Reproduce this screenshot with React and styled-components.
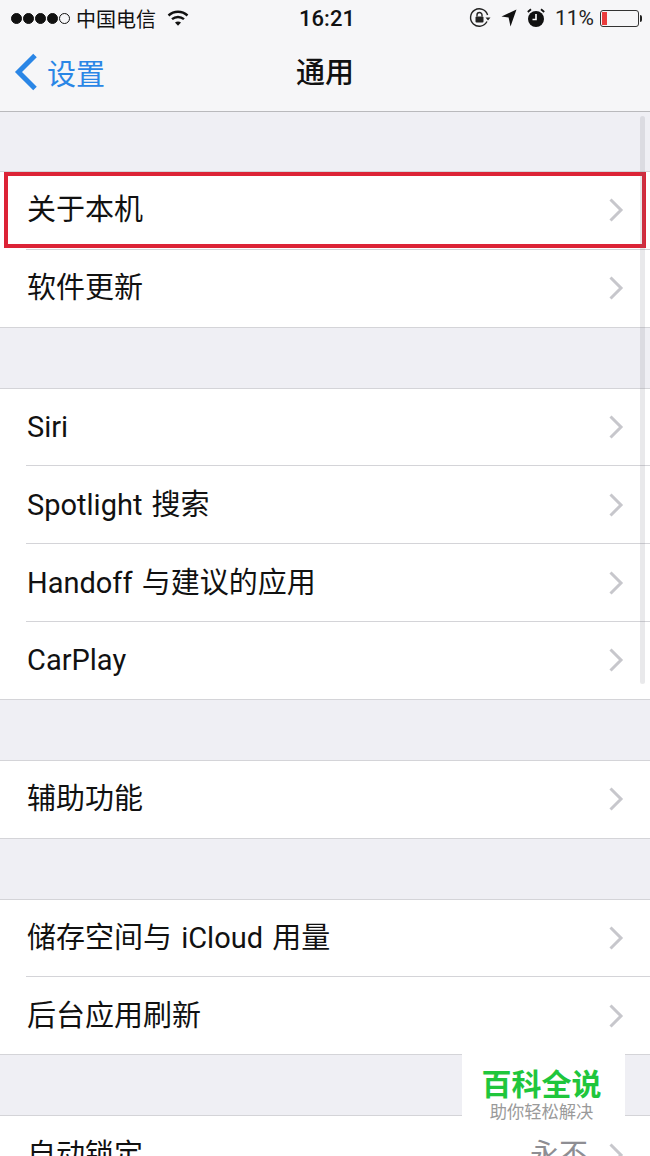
import styled, { createGlobalStyle } from "styled-components";

const CJK = `"Noto Sans CJK SC", sans-serif`;
const LATIN = `Roboto, "Noto Sans CJK SC", sans-serif`;

const GlobalStyle = createGlobalStyle`
  html, body {
    margin: 0;
    padding: 0;
    background: #efeff4;
  }
  * { box-sizing: border-box; }
`;

const Screen = styled.div`
  position: relative;
  width: 650px;
  height: 1156px;
  overflow: hidden;
  background: #efeff4;
  font-family: ${LATIN};
  color: #111;
`;

const Header = styled.header`
  height: 112px;
  background: #f6f6f8;
  border-bottom: 1px solid #b9b9bc;
`;

const StatusBar = styled.div`
  height: 36px;
  padding: 0 11px;
  display: grid;
  grid-template-columns: 1fr auto 1fr;
  align-items: center;
`;

const StatusLeft = styled.div`
  display: flex;
  align-items: center;
  font-size: 20px;
  font-family: ${CJK};
`;

const Signal = styled.div`
  display: flex;
  gap: 1px;
  margin-right: 6px;
`;

const Dot = styled.span`
  width: 11px;
  height: 11px;
  border-radius: 50%;
  background: ${({ $off }) => ($off ? "transparent" : "#111")};
  border: 1px solid #111;
`;

const Clock = styled.div`
  font-size: 22px;
  font-weight: 500;
  margin-left: 4px;
`;

const StatusRight = styled.div`
  display: flex;
  align-items: center;
  justify-content: flex-end;
  gap: 10px;
`;

const Percent = styled.span`
  font-size: 21px;
  margin-right: -4px;
  color: #222;
`;

const Battery = styled.div`
  width: 39px;
  height: 17px;
  border: 1px solid #333;
  border-radius: 3px;
  padding: 1px;
  position: relative;
  &::after {
    content: "";
    position: absolute;
    right: -4px;
    top: 4px;
    width: 2px;
    height: 7px;
    background: #222;
    border-radius: 0 2px 2px 0;
  }
`;

const BatteryFill = styled.div`
  width: 5px;
  height: 100%;
  background: #ea3c3c;
`;

const NavBar = styled.div`
  height: 75px;
  padding: 0 0 4px 14px;
  position: relative;
  display: flex;
  align-items: center;
`;

const BackLink = styled.div`
  display: flex;
  align-items: center;
  gap: 9px;
  color: #2a86e6;
  font-size: 29px;
  font-family: ${CJK};
`;

const NavTitle = styled.div`
  position: absolute;
  left: 0;
  right: 0;
  top: 13px;
  text-align: center;
  font-size: 29px;
  line-height: 42px;
  font-weight: 500;
  font-family: ${CJK};
`;

const Content = styled.main`
  padding-top: 59px;
  display: flex;
  flex-direction: column;
  gap: 60px;
`;

const Group = styled.section`
  background: #fff;
  border-top: 1px solid #d4d4d8;
  border-bottom: 1px solid #d4d4d8;
`;

const Row = styled.div`
  height: 77.8px;
  margin-left: 26px;
  padding-right: 26px;
  display: flex;
  align-items: center;
  justify-content: space-between;
  font-size: 29px;
  line-height: 40px;
  word-spacing: 2px;
  &:first-child {
    height: 76.8px;
  }
  & + & {
    border-top: 1px solid #d4d4d8;
  }
`;

const RowLabel = styled.span`
  margin-left: 1px;
`;

const RowRight = styled.div`
  display: flex;
  align-items: center;
  gap: 20px;
`;

const RowValue = styled.span`
  color: #8e8e93;
`;

const Highlight = styled.div`
  position: absolute;
  left: 4px;
  top: 172px;
  width: 642px;
  height: 76px;
  border: 4px solid #dc2336;
`;

const ScrollIndicator = styled.div`
  position: absolute;
  left: 640px;
  top: 116px;
  width: 5px;
  height: 568px;
  border-radius: 3px;
  background: rgba(120, 120, 130, 0.16);
`;

const Watermark = styled.div`
  position: absolute;
  left: 462px;
  top: 1053px;
  width: 163px;
  height: 80px;
  padding: 10px 4px 0 0;
  background: #fff;
  display: flex;
  flex-direction: column;
  align-items: center;
  font-family: ${CJK};
`;

const WatermarkTitle = styled.div`
  font-size: 30px;
  line-height: 38px;
  font-weight: 700;
  color: #1fc63c;
`;

const WatermarkSub = styled.div`
  font-size: 17.3px;
  line-height: 20px;
  color: #9a9a9a;
`;

function Chevron() {
  return (
    <svg width="16" height="26" viewBox="0 0 16 26" fill="none">
      <path d="M2.5 2.5L13 13L2.5 23.5" stroke="#c7c7cc" strokeWidth="3" />
    </svg>
  );
}

function BackChevron() {
  return (
    <svg width="24" height="38" viewBox="0 0 24 38" fill="none">
      <path d="M21 2.5L4.5 19L21 35.5" stroke="#2a86e6" strokeWidth="5" />
    </svg>
  );
}

function WifiIcon() {
  return (
    <svg width="22" height="18" viewBox="0 0 22 18" fill="none" style={{ marginLeft: 11 }}>
      <path d="M1.5 6.5C7 1.5 15 1.5 20.5 6.5" stroke="#111" strokeWidth="2.4" />
      <path d="M5 10.2C8.5 7.2 13.5 7.2 17 10.2" stroke="#111" strokeWidth="2.4" />
      <path d="M8 13.6L11 16.8L14 13.6C12.2 12.2 9.8 12.2 8 13.6Z" fill="#111" />
    </svg>
  );
}

function RotationLockIcon() {
  return (
    <svg width="22" height="22" viewBox="0 0 22 22" fill="none">
      <path d="M18 14.5A8.7 8.7 0 1 1 18.6 8" stroke="#222" strokeWidth="1.4" />
      <path d="M16.5 10.5H21.5L19 13.5Z" fill="#222" />
      <rect x="6.5" y="9.5" width="8" height="6" rx="1" fill="#222" />
      <path d="M8 9.5V8A2.5 2.5 0 0 1 13 8V9.5" stroke="#222" strokeWidth="1.4" />
    </svg>
  );
}

function LocationIcon() {
  return (
    <svg width="16" height="18" viewBox="0 0 16 18" fill="#111">
      <path d="M15.5 0.5L9.5 17.5L7.6 8.6L0.5 7.5Z" />
    </svg>
  );
}

function AlarmIcon() {
  return (
    <svg width="18" height="20" viewBox="0 0 18 20" fill="none">
      <circle cx="9" cy="11" r="8" fill="#111" />
      <path d="M9 6V11.5H5.5" stroke="#fff" strokeWidth="1.6" />
      <path d="M0.8 4L4 1.2M17.2 4L14 1.2" stroke="#111" strokeWidth="1.8" />
    </svg>
  );
}

const groups = [
  [{ label: "关于本机" }, { label: "软件更新" }],
  [
    { label: "Siri" },
    { label: "Spotlight 搜索" },
    { label: "Handoff 与建议的应用" },
    { label: "CarPlay" },
  ],
  [{ label: "辅助功能" }],
  [{ label: "储存空间与 iCloud 用量" }, { label: "后台应用刷新" }],
  [{ label: "自动锁定", value: "永不" }],
];

export default function App() {
  return (
    <Screen>
      <GlobalStyle />
      <Header>
        <StatusBar>
          <StatusLeft>
            <Signal>
              <Dot />
              <Dot />
              <Dot />
              <Dot />
              <Dot $off />
            </Signal>
            中国电信
            <WifiIcon />
          </StatusLeft>
          <Clock>16:21</Clock>
          <StatusRight>
            <RotationLockIcon />
            <LocationIcon />
            <AlarmIcon />
            <Percent>11%</Percent>
            <Battery>
              <BatteryFill />
            </Battery>
          </StatusRight>
        </StatusBar>
        <NavBar>
          <BackLink>
            <BackChevron />
            设置
          </BackLink>
          <NavTitle>通用</NavTitle>
        </NavBar>
      </Header>
      <Content>
        {groups.map((rows) => (
          <Group key={rows[0].label}>
            {rows.map((row) => (
              <Row key={row.label}>
                <RowLabel>{row.label}</RowLabel>
                <RowRight>
                  {row.value && <RowValue>{row.value}</RowValue>}
                  <Chevron />
                </RowRight>
              </Row>
            ))}
          </Group>
        ))}
      </Content>
      <Highlight />
      <ScrollIndicator />
      <Watermark>
        <WatermarkTitle>百科全说</WatermarkTitle>
        <WatermarkSub>助你轻松解决</WatermarkSub>
      </Watermark>
    </Screen>
  );
}
